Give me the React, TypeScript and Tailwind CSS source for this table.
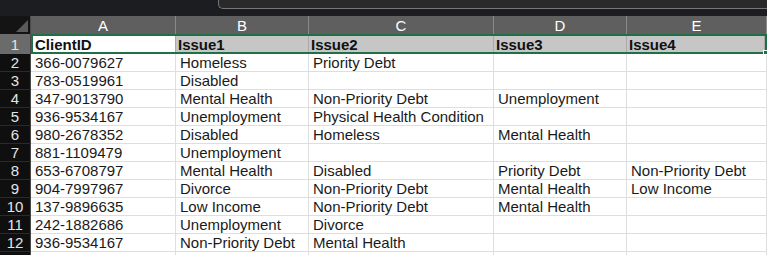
const cols = ["A", "B", "C", "D", "E"];
const widths = ["w-[145px]", "w-[133px]", "w-[185px]", "w-[133px]", "flex-1"];

const rows: string[][] = [
  ["366-0079627", "Homeless", "Priority Debt", "", ""],
  ["783-0519961", "Disabled", "", "", ""],
  ["347-9013790", "Mental Health", "Non-Priority Debt", "Unemployment", ""],
  ["936-9534167", "Unemployment", "Physical Health Condition", "", ""],
  ["980-2678352", "Disabled", "Homeless", "Mental Health", ""],
  ["881-1109479", "Unemployment", "", "", ""],
  ["653-6708797", "Mental Health", "Disabled", "Priority Debt", "Non-Priority Debt"],
  ["904-7997967", "Divorce", "Non-Priority Debt", "Mental Health", "Low Income"],
  ["137-9896635", "Low Income", "Non-Priority Debt", "Mental Health", ""],
  ["242-1882686", "Unemployment", "Divorce", "", ""],
  ["936-9534167", "Non-Priority Debt", "Mental Health", "", ""],
  ["", "", "", "", ""],
];

const font = { fontFamily: "'Liberation Sans', Arial, sans-serif" };

const App = () => {
  return (
    <div className="w-[767px] h-[255px] overflow-hidden bg-white text-[15px] leading-none" style={font}>
      {/* top strip with formula box */}
      <div className="h-[16px] bg-[#1b1d21]">
        <div className="ml-[218px] h-[9px] bg-[#2a2a2a] border-l border-b border-[#777] rounded-bl-[5px]" />
      </div>

      {/* column headers */}
      <div className="flex h-[18px] bg-[#5f5f5f] text-white">
        <div className="w-[31px] bg-[#141414] border-r border-[#4a4a4a] flex items-end justify-end pr-[2px] pb-[2px]">
          <div className="w-0 h-0 border-l-[12px] border-l-transparent border-b-[12px] border-b-[#5a5a5a]" />
        </div>
        {cols.map((c, i) => (
          <div
            key={c}
            className={`${widths[i]} flex items-center justify-center border-r border-[#8a8a8a]`}
          >
            {c}
          </div>
        ))}
      </div>

      {/* row 1 (selected) */}
      <div className="flex h-[20px]">
        <div className="w-[31px] bg-[#6b6b6b] text-[#e4e4e4] flex items-center justify-center border-r border-[#4a4a4a]">
          1
        </div>
        <div className="relative flex-1 flex border-2 border-[#1f7046] font-bold text-[#111]">
          {["ClientID", "Issue1", "Issue2", "Issue3", "Issue4"].map((t, i) => (
            <div
              key={t}
              className={`${i === 0 ? "w-[143px] bg-white" : widths[i] + " bg-[#c6c6c6]"} flex items-center pl-[2px] border-r border-[#a9a9a9]`}
            >
              {t}
            </div>
          ))}
          <div className="absolute right-[-3px] bottom-[-3px] w-[5px] h-[5px] bg-[#1f7046] border border-white" />
        </div>
      </div>

      {/* data rows */}
      {rows.map((r, ri) => (
        <div key={ri} className="flex h-[18px]">
          <div className="w-[31px] bg-[#0f0f0f] text-[#e4e4e4] flex items-center justify-center border-r border-[#4a4a4a] border-b border-b-[#2a2a2a]">
            {ri < 11 ? ri + 2 : ""}
          </div>
          {r.map((v, ci) => (
            <div
              key={ci}
              className={`${widths[ci]} flex items-center pl-[4px] whitespace-nowrap text-[#1a1a1a] border-r border-b border-[#dedede]`}
            >
              {v}
            </div>
          ))}
        </div>
      ))}
    </div>
  );
};

export default App;
